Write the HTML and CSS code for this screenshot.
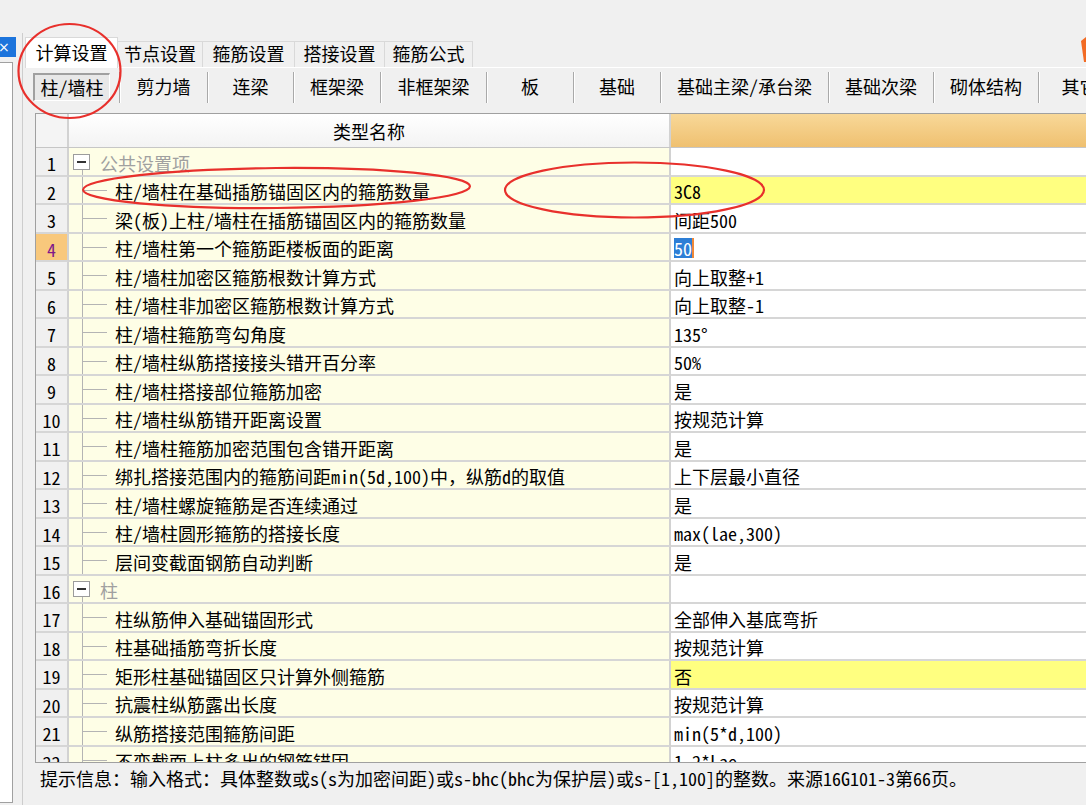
FILE: index.html
```html
<!DOCTYPE html>
<html lang="zh-CN">
<head>
<meta charset="utf-8">
<title>计算设置</title>
<link rel="stylesheet" href="styles.css">
</head>
<body>
<div class="app">
  <div class="side">
    <div class="side-title"><span class="side-x">×</span></div>
    <div class="side-list"></div>
  </div>
  <div class="main">
    <div class="tabs">
      <div class="tab active">计算设置</div>
      <div class="tab t85">节点设置</div>
      <div class="tab t92">箍筋设置</div>
      <div class="tab t90">搭接设置</div>
      <div class="tab t88">箍筋公式</div>
    </div>
    <div class="panel">
      <div class="subtabs">
        <div class="sub active">柱/墙柱</div>
        <div class="sub s88">剪力墙</div>
        <div class="sub s86">连梁</div>
        <div class="sub s87">框架梁</div>
        <div class="sub s106">非框架梁</div>
        <div class="sub s87">板</div>
        <div class="sub s87">基础</div>
        <div class="sub s168">基础主梁/承台梁</div>
        <div class="sub s105">基础次梁</div>
        <div class="sub s105">砌体结构</div>
        <div class="sub s82">其它</div>
      </div>
      <div class="grid">
        <div class="grid-head">
          <div class="hnum"></div>
          <div class="hname">类型名称</div>
          <div class="hval"></div>
        </div>
        <div class="grid-body">
          <div class="row"><div class="num">1</div><div class="name sect"><span class="box"></span><span class="sect-text">公共设置项</span></div><div class="val"></div></div>
          <div class="row"><div class="num">2</div><div class="name"><span class="vline"></span><span class="hline"></span>柱/墙柱在基础插筋锚固区内的箍筋数量</div><div class="val hl">3C8</div></div>
          <div class="row"><div class="num">3</div><div class="name"><span class="vline"></span><span class="hline"></span>梁(板)上柱/墙柱在插筋锚固区内的箍筋数量</div><div class="val">间距500</div></div>
          <div class="row"><div class="num cur">4</div><div class="name"><span class="vline"></span><span class="hline"></span>柱/墙柱第一个箍筋距楼板面的距离</div><div class="val"><span class="sel">50</span></div></div>
          <div class="row"><div class="num">5</div><div class="name"><span class="vline"></span><span class="hline"></span>柱/墙柱加密区箍筋根数计算方式</div><div class="val">向上取整+1</div></div>
          <div class="row"><div class="num">6</div><div class="name"><span class="vline"></span><span class="hline"></span>柱/墙柱非加密区箍筋根数计算方式</div><div class="val">向上取整-1</div></div>
          <div class="row"><div class="num">7</div><div class="name"><span class="vline"></span><span class="hline"></span>柱/墙柱箍筋弯勾角度</div><div class="val">135°</div></div>
          <div class="row"><div class="num">8</div><div class="name"><span class="vline"></span><span class="hline"></span>柱/墙柱纵筋搭接接头错开百分率</div><div class="val">50%</div></div>
          <div class="row"><div class="num">9</div><div class="name"><span class="vline"></span><span class="hline"></span>柱/墙柱搭接部位箍筋加密</div><div class="val">是</div></div>
          <div class="row"><div class="num">10</div><div class="name"><span class="vline"></span><span class="hline"></span>柱/墙柱纵筋错开距离设置</div><div class="val">按规范计算</div></div>
          <div class="row"><div class="num">11</div><div class="name"><span class="vline"></span><span class="hline"></span>柱/墙柱箍筋加密范围包含错开距离</div><div class="val">是</div></div>
          <div class="row"><div class="num">12</div><div class="name"><span class="vline"></span><span class="hline"></span>绑扎搭接范围内的箍筋间距min(5d,100)中，纵筋d的取值</div><div class="val">上下层最小直径</div></div>
          <div class="row"><div class="num">13</div><div class="name"><span class="vline"></span><span class="hline"></span>柱/墙柱螺旋箍筋是否连续通过</div><div class="val">是</div></div>
          <div class="row"><div class="num">14</div><div class="name"><span class="vline"></span><span class="hline"></span>柱/墙柱圆形箍筋的搭接长度</div><div class="val">max(lae,300)</div></div>
          <div class="row"><div class="num">15</div><div class="name"><span class="vline"></span><span class="hline"></span>层间变截面钢筋自动判断</div><div class="val">是</div></div>
          <div class="row"><div class="num">16</div><div class="name sect"><span class="box"></span><span class="sect-text">柱</span></div><div class="val"></div></div>
          <div class="row"><div class="num">17</div><div class="name"><span class="vline"></span><span class="hline"></span>柱纵筋伸入基础锚固形式</div><div class="val">全部伸入基底弯折</div></div>
          <div class="row"><div class="num">18</div><div class="name"><span class="vline"></span><span class="hline"></span>柱基础插筋弯折长度</div><div class="val">按规范计算</div></div>
          <div class="row"><div class="num">19</div><div class="name"><span class="vline"></span><span class="hline"></span>矩形柱基础锚固区只计算外侧箍筋</div><div class="val hl">否</div></div>
          <div class="row"><div class="num">20</div><div class="name"><span class="vline"></span><span class="hline"></span>抗震柱纵筋露出长度</div><div class="val">按规范计算</div></div>
          <div class="row"><div class="num">21</div><div class="name"><span class="vline"></span><span class="hline"></span>纵筋搭接范围箍筋间距</div><div class="val">min(5*d,100)</div></div>
          <div class="row"><div class="num">22</div><div class="name"><span class="vline"></span><span class="hline"></span>不变截面上柱多出的钢筋锚固</div><div class="val">1.2*Lae</div></div>
        </div>
      </div>
      <div class="status">提示信息：输入格式：具体整数或s(s为加密间距)或s-bhc(bhc为保护层)或s-[1,100]的整数。来源16G101-3第66页。</div>
    </div>
  </div>
</div>
<svg class="marks" width="1086" height="805" viewBox="0 0 1086 805">
  <polygon class="orange" points="1081,41 1086,37 1086,62 1084,62"/>
  <ellipse class="mark" cx="69.5" cy="71" rx="51" ry="47"/>
  <ellipse class="mark" cx="276.5" cy="188" rx="193.5" ry="20" transform="rotate(-0.5 276.5 188)"/>
  <ellipse class="mark" cx="634.5" cy="190" rx="129.5" ry="27.5"/>
</svg>
</body>
</html>
```
FILE: styles.css
```css
* { box-sizing: border-box; }
html, body { margin: 0; padding: 0; }
body {
  width: 1086px;
  height: 805px;
  overflow: hidden;
  position: relative;
  background: #f0f0f0;
  color: #000;
  font-family: "Noto Sans Mono CJK SC", "Noto Sans CJK SC", sans-serif;
  font-size: 18px;
  line-height: 1;
}
.app { display: flex; height: 805px; }

/* left strip */
.side { width: 22px; flex: none; display: flex; flex-direction: column; }
.side-title {
  margin-top: 37px; height: 20px; width: 16px;
  background: #1c74dc; color: #fff; overflow: hidden;
  display: flex; align-items: center;
  font-family: "DejaVu Sans", sans-serif; font-size: 14px;
}
.side-x { margin-left: -2px; }
.side-list {
  margin-top: 5px; margin-bottom: 2px; width: 13px; flex: 1;
  background: #fff; border: 1px solid #a0a0a0; border-left: none;
}

/* main */
.main {
  flex: 1; min-width: 0; margin-top: 33px;
  border-left: 1px solid #cdcdcd; padding-left: 2px;
  display: flex; flex-direction: column;
}
.tabs {
  height: 34px; padding-top: 4px;
  display: flex; align-items: flex-end;
  position: relative; z-index: 1;
}
.tab {
  height: 26px; flex: none; padding-bottom: 3px;
  display: flex; align-items: center; justify-content: center;
  background: #f0f0f0;
  border-top: 1px solid #d9d9d9; border-right: 1px solid #d9d9d9;
}
.tab.active {
  width: 93px; height: 31px; margin-bottom: -1px; padding-bottom: 2px;
  background: #fff; border-left: 1px solid #d9d9d9;
}
.t85 { width: 85px; }
.t92 { width: 92px; }
.t90 { width: 90px; }
.t88 { width: 88px; }

.panel { flex: 1; min-height: 0; border-top: 1px solid #fff; display: flex; flex-direction: column; }
.subtabs {
  height: 45px; flex: none; padding: 4px 0 0 8px;
  display: flex; align-items: flex-start; overflow: hidden;
}
.sub {
  height: 31px; flex: none; padding-bottom: 3px;
  display: flex; align-items: center; justify-content: center;
  border-left: 1px solid #a9a9a9; box-shadow: inset 1px 0 #fff;
  white-space: nowrap;
}
.sub.active {
  width: 77px; height: 28px; margin: 1px 9px 0 0; padding-bottom: 2px;
  border-top: 2px solid #a0a0a0; border-left: 2px solid #a0a0a0;
  border-right: 1px solid #fff; border-bottom: 1px solid #fff;
  background: #e8e8e8; box-shadow: none;
}
.s82 { width: 82px; }
.s86 { width: 86px; }
.s87 { width: 87px; }
.s88 { width: 88px; }
.s105 { width: 105px; }
.s106 { width: 106px; }
.s168 { width: 168px; }

/* grid */
.grid {
  height: 650px; flex: none; margin-left: 10px; overflow: hidden;
  border-top: 1px solid #a0a0a0; border-left: 1px solid #a0a0a0; border-bottom: 1px solid #a0a0a0;
}
.grid-head {
  height: 34px; display: grid; grid-template-columns: 33px 602px 1fr;
  border-bottom: 1px solid #c6c6c6;
}
.hnum { background: #f4f4f4; border-right: 2px solid #d2d2d2; }
.hname {
  background: linear-gradient(#ffffff, #f3f3f3);
  border-right: 2px solid #d2d2d2;
  display: flex; align-items: center; justify-content: center;
}
.hval { background: linear-gradient(#f8d898, #efc070); }

.row { display: grid; grid-template-columns: 33px 602px 1fr; height: 29px; }
.row:nth-child(even) { height: 28px; }
.row > div { border-bottom: 2px solid #d6d6d6; display: flex; align-items: center; white-space: nowrap; overflow: hidden; padding-top: 2px; }
.num { justify-content: center; background: #f0f0f0; border-right: 2px solid #d2d2d2; }
.row > .num { padding-top: 3px; }
.num.cur { background: #f8c87c; color: #80188a; }
.name { background: #fefee6; border-right: 2px solid #d2d2d2; padding-left: 13px; }
.val { background: #fff; padding-left: 3px; }
.val.hl { background: #ffff80; }
.sel { background: #2d7ed6; color: #fff; border-right: 2px solid #f08838; padding: 1px 0; }

.vline { align-self: stretch; width: 1px; background: #b4b4b4; flex: none; margin-top: -2px; }
.hline { width: 24px; height: 1px; background: #b4b4b4; flex: none; margin-right: 8px; margin-top: -2px; }

.row > .name.sect { padding-left: 4px; padding-top: 0; }
.box {
  width: 17px; height: 16px; flex: none; position: relative;
  border: 1px solid #9c9c9c; background: #fff;
  display: flex; align-items: center; justify-content: center;
}
.box::before { content: ""; width: 9px; height: 2px; background: #333; }
.box::after {
  content: ""; position: absolute; left: 8px; top: 15px;
  width: 1px; height: 12px; background: #b4b4b4;
}
.sect-text { margin-left: 10px; color: #a0a0a0; padding-top: 2px; }

.status { height: 42px; flex: none; padding: 3px 0 0 15px; line-height: 24px; white-space: nowrap; }

/* overlay annotations */
.marks { position: absolute; left: 0; top: 0; pointer-events: none; z-index: 10; }
.mark { fill: none; stroke: #e8302c; stroke-width: 2.2; }
.orange { fill: #f26b24; }
```
